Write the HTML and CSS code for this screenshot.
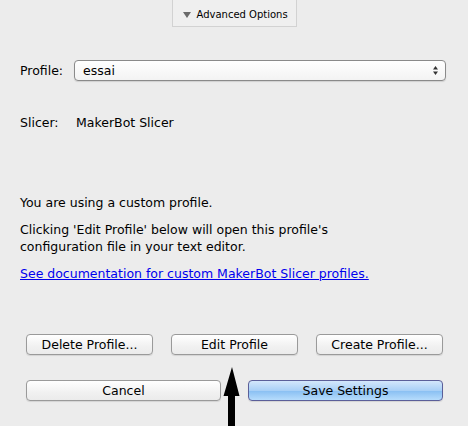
FILE: index.html
```html
<!DOCTYPE html>
<html>
<head>
<meta charset="utf-8">
<link rel="stylesheet" href="styles.css">
</head>
<body>
<div class="page">
  <div class="tab-wrap">
    <div class="tab"><span class="tri"></span>Advanced Options</div>
  </div>
  <div class="row profile-row">
    <span class="label">Profile:</span>
    <div class="select"><span>essai</span><span class="updown"><svg width="7" height="11" viewBox="0 0 7 11"><path d="M3.5 1 L6 4.5 L1 4.5 Z" fill="#333"/><path d="M3.5 10 L6 6.5 L1 6.5 Z" fill="#333"/></svg></span></div>
  </div>
  <div class="row slicer-row">
    <span class="label slabel">Slicer:</span>
    <span>MakerBot Slicer</span>
  </div>
  <div class="info">
    <p class="p1">You are using a custom profile.</p>
    <p class="p2">Clicking 'Edit Profile' below will open this profile's<br>configuration file in your text editor.</p>
    <p class="p3"><a href="#">See documentation for custom MakerBot Slicer profiles.</a></p>
  </div>
  <div class="btn-row r1">
    <button class="btn">Delete Profile...</button>
    <button class="btn">Edit Profile</button>
    <button class="btn">Create Profile...</button>
  </div>
  <div class="btn-row r2">
    <button class="btn wide">Cancel</button>
    <button class="btn wide primary">Save Settings</button>
  </div>
  <svg class="arrow" width="18" height="60" viewBox="0 0 18 60"><path d="M9 0 L16.5 29 L12 29 L12 60 L5 60 L5 29 L0.5 29 Z" fill="#000"/></svg>
</div>
</body>
</html>
```
FILE: styles.css
```css
html, body {
  margin: 0;
  padding: 0;
  background: #ececec;
}
body {
  width: 468px;
  height: 426px;
  overflow: hidden;
  font-family: "DejaVu Sans", "Lucida Grande", sans-serif;
  font-size: 12.5px;
  color: #000;
}
.page {
  position: relative;
  height: 426px;
}
.tab-wrap {
  display: flex;
  justify-content: center;
}
.tab {
  width: 125px;
  height: 27px;
  border: 1px solid #d2d2d2;
  border-top: none;
  background: #efefef;
  display: flex;
  align-items: center;
  box-sizing: border-box;
  font-size: 10px;
  padding-top: 3px;
  white-space: nowrap;
  flex-shrink: 0;
}
.tri {
  flex-shrink: 0;
  width: 0;
  height: 0;
  border-left: 4px solid transparent;
  border-right: 4px solid transparent;
  border-top: 6px solid #6a6a6a;
  margin: 1px 6px 0 10px;
}
.row {
  display: flex;
  align-items: center;
  padding-left: 20px;
}
.profile-row {
  margin-top: 33px;
  height: 21px;
}
.label {
  width: 54px;
}
.select {
  width: 372px;
  height: 21px;
  border: 1px solid #8a8a8a;
  border-radius: 4px;
  background: linear-gradient(#ffffff, #f3f3f3);
  display: flex;
  align-items: center;
  justify-content: space-between;
  padding: 0 6px 0 8px;
  box-sizing: border-box;
  box-shadow: 0 1px 1px rgba(0,0,0,0.12);
}
.updown {
  display: flex;
}
.slicer-row {
  margin-top: 32px;
  height: 18px;
}
.slabel {
  width: 56px;
}
.info {
  padding-left: 20px;
  margin-top: 63px;
}
.info p {
  margin: 0;
  line-height: 17px;
}
.p2 {
  margin-top: 10px !important;
}
.p3 {
  margin-top: 10px !important;
}
a {
  color: #0000ee;
  text-decoration: underline;
}
.btn-row {
  display: flex;
  padding-left: 26px;
  gap: 18px;
}
.r1 {
  margin-top: 52px;
}
.r2 {
  margin-top: 25px;
  gap: 27px;
}
.btn {
  font-family: "DejaVu Sans", "Lucida Grande", sans-serif;
  font-size: 12.5px;
  color: #000;
  width: 127px;
  height: 21px;
  padding: 0;
  border: 1px solid #9a9a9a;
  border-radius: 4px;
  background: linear-gradient(#ffffff, #f1f1f1 60%, #ebebeb);
  box-shadow: 0 1px 1px rgba(0,0,0,0.1);
}
.btn.wide {
  width: 195px;
}
.btn.primary {
  border-color: #5b5f99;
  background: linear-gradient(#d3e7fb, #a9d0f6 50%, #8cc1f3 55%, #b6dcfc);
}
.arrow {
  position: absolute;
  left: 223px;
  top: 367px;
}
```
